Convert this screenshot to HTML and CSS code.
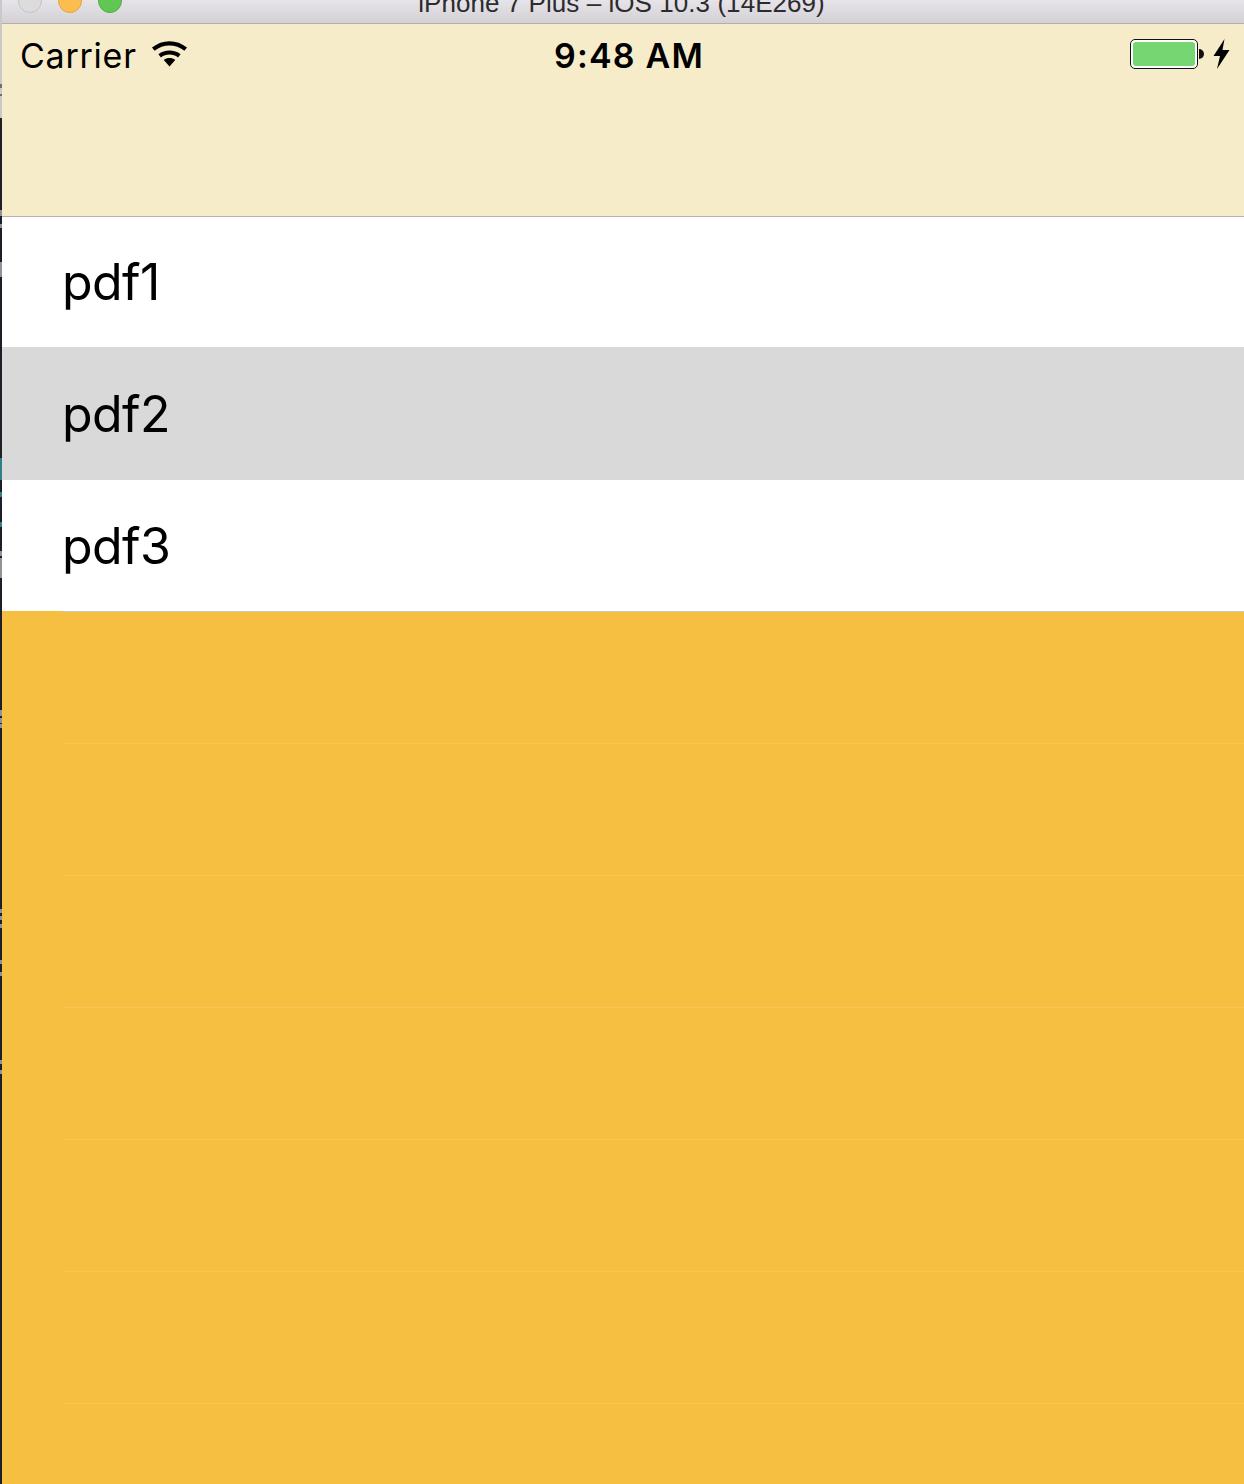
FILE: index.html
```html
<!DOCTYPE html>
<html lang="en">
<head>
<meta charset="utf-8">
<title>iPhone 7 Plus simulator</title>
<link rel="stylesheet" href="styles.css">
</head>
<body>
<div class="page">
  <div class="edge"></div>
  <div class="main">
    <div class="titlebar">
      <div class="lights">
        <span class="light light-close"></span>
        <span class="light light-min"></span>
        <span class="light light-max"></span>
      </div>
      <div class="window-title">iPhone 7 Plus – iOS 10.3 (14E269)</div>
    </div>
    <header class="navbar">
      <div class="status">
        <div class="status-left">
          <span class="carrier">Carrier</span>
          <svg class="wifi" width="37" height="27" viewBox="0 0 37 27" aria-hidden="true">
            <path d="M1 7.6 C11 -1 26 -1 36 7.6 L33.4 10.8 C24.6 3.6 12.4 3.6 3.6 10.8 Z"/>
            <path d="M7.4 14.2 C13.6 9.2 23.4 9.2 29.6 14.2 L27 17.4 C22.2 13.6 14.8 13.6 10 17.4 Z"/>
            <path d="M12.8 20 C16 17.4 21 17.4 24.2 20 L18.5 26.6 Z"/>
          </svg>
        </div>
        <span class="clock">9:48 AM</span>
        <div class="status-right">
          <span class="battery"><span class="battery-fill"></span></span>
          <span class="battery-nub"></span>
          <svg class="bolt" width="17" height="30" viewBox="0 0 17 30" aria-hidden="true">
            <path d="M11.5 0 L0.5 17 L7 17 L4 30 L16.5 11 L9.5 11 Z"/>
          </svg>
        </div>
      </div>
    </header>
    <ul class="list">
      <li class="row row-first">pdf1</li>
      <li class="row row-selected">pdf2</li>
      <li class="row row-last">pdf3</li>
    </ul>
    <div class="empty">
      <div class="empty-row"></div>
      <div class="empty-row"></div>
      <div class="empty-row"></div>
      <div class="empty-row"></div>
      <div class="empty-row"></div>
      <div class="empty-row"></div>
    </div>
  </div>
</div>
</body>
</html>
```

FILE: styles.css
```css
* { box-sizing: border-box; }
html, body { margin: 0; padding: 0; }
body { background: #f6bf41; font-family: Inter, "Noto Sans", sans-serif; color: #000; }

.page { display: flex; width: 1244px; height: 1484px; overflow: hidden; }

.edge {
  flex: 0 0 2px;
  background:
    linear-gradient(#6c6f74, #6c6f74) 0 84px / 2px 4px no-repeat,
    linear-gradient(#6c6f74, #6c6f74) 0 94px / 2px 2px no-repeat,
    linear-gradient(#c9c9c9, #c9c9c9) 0 0 / 2px 118px no-repeat,
    linear-gradient(#8f9296, #8f9296) 0 210px / 2px 6px no-repeat,
    linear-gradient(#8f9296, #8f9296) 0 224px / 2px 4px no-repeat,
    linear-gradient(#8f9296, #8f9296) 0 262px / 2px 15px no-repeat,
    linear-gradient(#2f7f85, #2f7f85) 0 458px / 2px 22px no-repeat,
    linear-gradient(#2f7f85, #2f7f85) 0 492px / 2px 5px no-repeat,
    linear-gradient(#2f7f85, #2f7f85) 0 522px / 2px 5px no-repeat,
    linear-gradient(#8f9296, #8f9296) 0 551px / 2px 5px no-repeat,
    linear-gradient(#8f9296, #8f9296) 0 558px / 2px 20px no-repeat,
    linear-gradient(#8f9296, #8f9296) 0 710px / 2px 6px no-repeat,
    linear-gradient(#8f9296, #8f9296) 0 718px / 2px 5px no-repeat,
    linear-gradient(#8f9296, #8f9296) 0 724px / 2px 4px no-repeat,
    linear-gradient(#8f9296, #8f9296) 0 909px / 2px 4px no-repeat,
    linear-gradient(#8f9296, #8f9296) 0 916px / 2px 4px no-repeat,
    linear-gradient(#8f9296, #8f9296) 0 924px / 2px 4px no-repeat,
    linear-gradient(#8f9296, #8f9296) 0 960px / 2px 4px no-repeat,
    linear-gradient(#8f9296, #8f9296) 0 972px / 2px 4px no-repeat,
    linear-gradient(#8f9296, #8f9296) 0 1060px / 2px 4px no-repeat,
    linear-gradient(#8f9296, #8f9296) 0 1070px / 2px 4px no-repeat,
    #1d1e26;
}

.main { flex: 1; min-width: 0; display: flex; flex-direction: column; }

.titlebar {
  height: 24px;
  flex: none;
  overflow: hidden;
  display: grid;
  grid-template-columns: 1fr;
  background: linear-gradient(#e6e4e8, #d3d1d5);
  border-bottom: 1px solid #b1afb2;
}
.lights { grid-area: 1 / 1; display: flex; gap: 16px; padding-left: 16px; margin-top: -11px; }
.light { width: 24px; height: 24px; border-radius: 50%; border: 1px solid; flex: none; }
.light-close { background: #dcdcdc; border-color: #c4c4c4; }
.light-min { background: #fbbd4f; border-color: #e5a53e; }
.light-max { background: #62c654; border-color: #52ad47; }
.window-title {
  grid-area: 1 / 1;
  margin-top: -11px;
  text-align: center;
  padding-right: 3px;
  font-family: "Liberation Sans", Arial, sans-serif;
  font-size: 26px;
  line-height: 28px;
  letter-spacing: 0.06px;
  white-space: nowrap;
  color: #2c2b2e;
}

.navbar { height: 193px; flex: none; background: #f7ecc9; border-bottom: 1px solid #b8b4a4; }
.status { display: grid; grid-template-columns: 1fr auto 1fr; align-items: start; padding: 13px 14px 0 18px; }
.status-left { display: flex; align-items: flex-start; gap: 14px; }
.carrier { font-size: 34px; line-height: 38px; letter-spacing: 0.75px; }
.wifi { margin-top: 3px; }
.clock { font-size: 34px; font-weight: 600; line-height: 38px; letter-spacing: 1.2px; margin-left: 8px; }
.status-right { display: flex; justify-content: flex-end; align-items: center; margin-top: 2px; }
.battery { width: 68px; height: 30px; padding: 2px; border: 1.5px solid #111; border-radius: 5px; background: #fff; display: block; }
.battery-fill { display: block; width: 100%; height: 100%; background: #76d672; border-radius: 3px; }
.battery-nub { width: 5px; height: 10px; background: #111; border-radius: 0 5px 5px 0; margin-left: 1px; margin-right: 9px; }

.list { list-style: none; margin: 0; padding: 0; flex: none; }
.row { background: #fff; padding-left: 60px; font-size: 50px; letter-spacing: -0.6px; }
.row-first { height: 130px; line-height: 130px; }
.row-selected { background: #d9d9d9; height: 133px; line-height: 134px; }
.row-last {
  height: 132px;
  line-height: 132px;
  background: linear-gradient(#fff, #fff) 0 0 / 100% 131px no-repeat, linear-gradient(90deg, #f6bf41 60px, #c9c7c3 60px);
}

.empty { flex: 1; background: #f6bf41; }
.empty-row { height: 132px; background: linear-gradient(90deg, transparent 62px, #f7c655 62px) 0 100% / 100% 1px no-repeat; }
```
